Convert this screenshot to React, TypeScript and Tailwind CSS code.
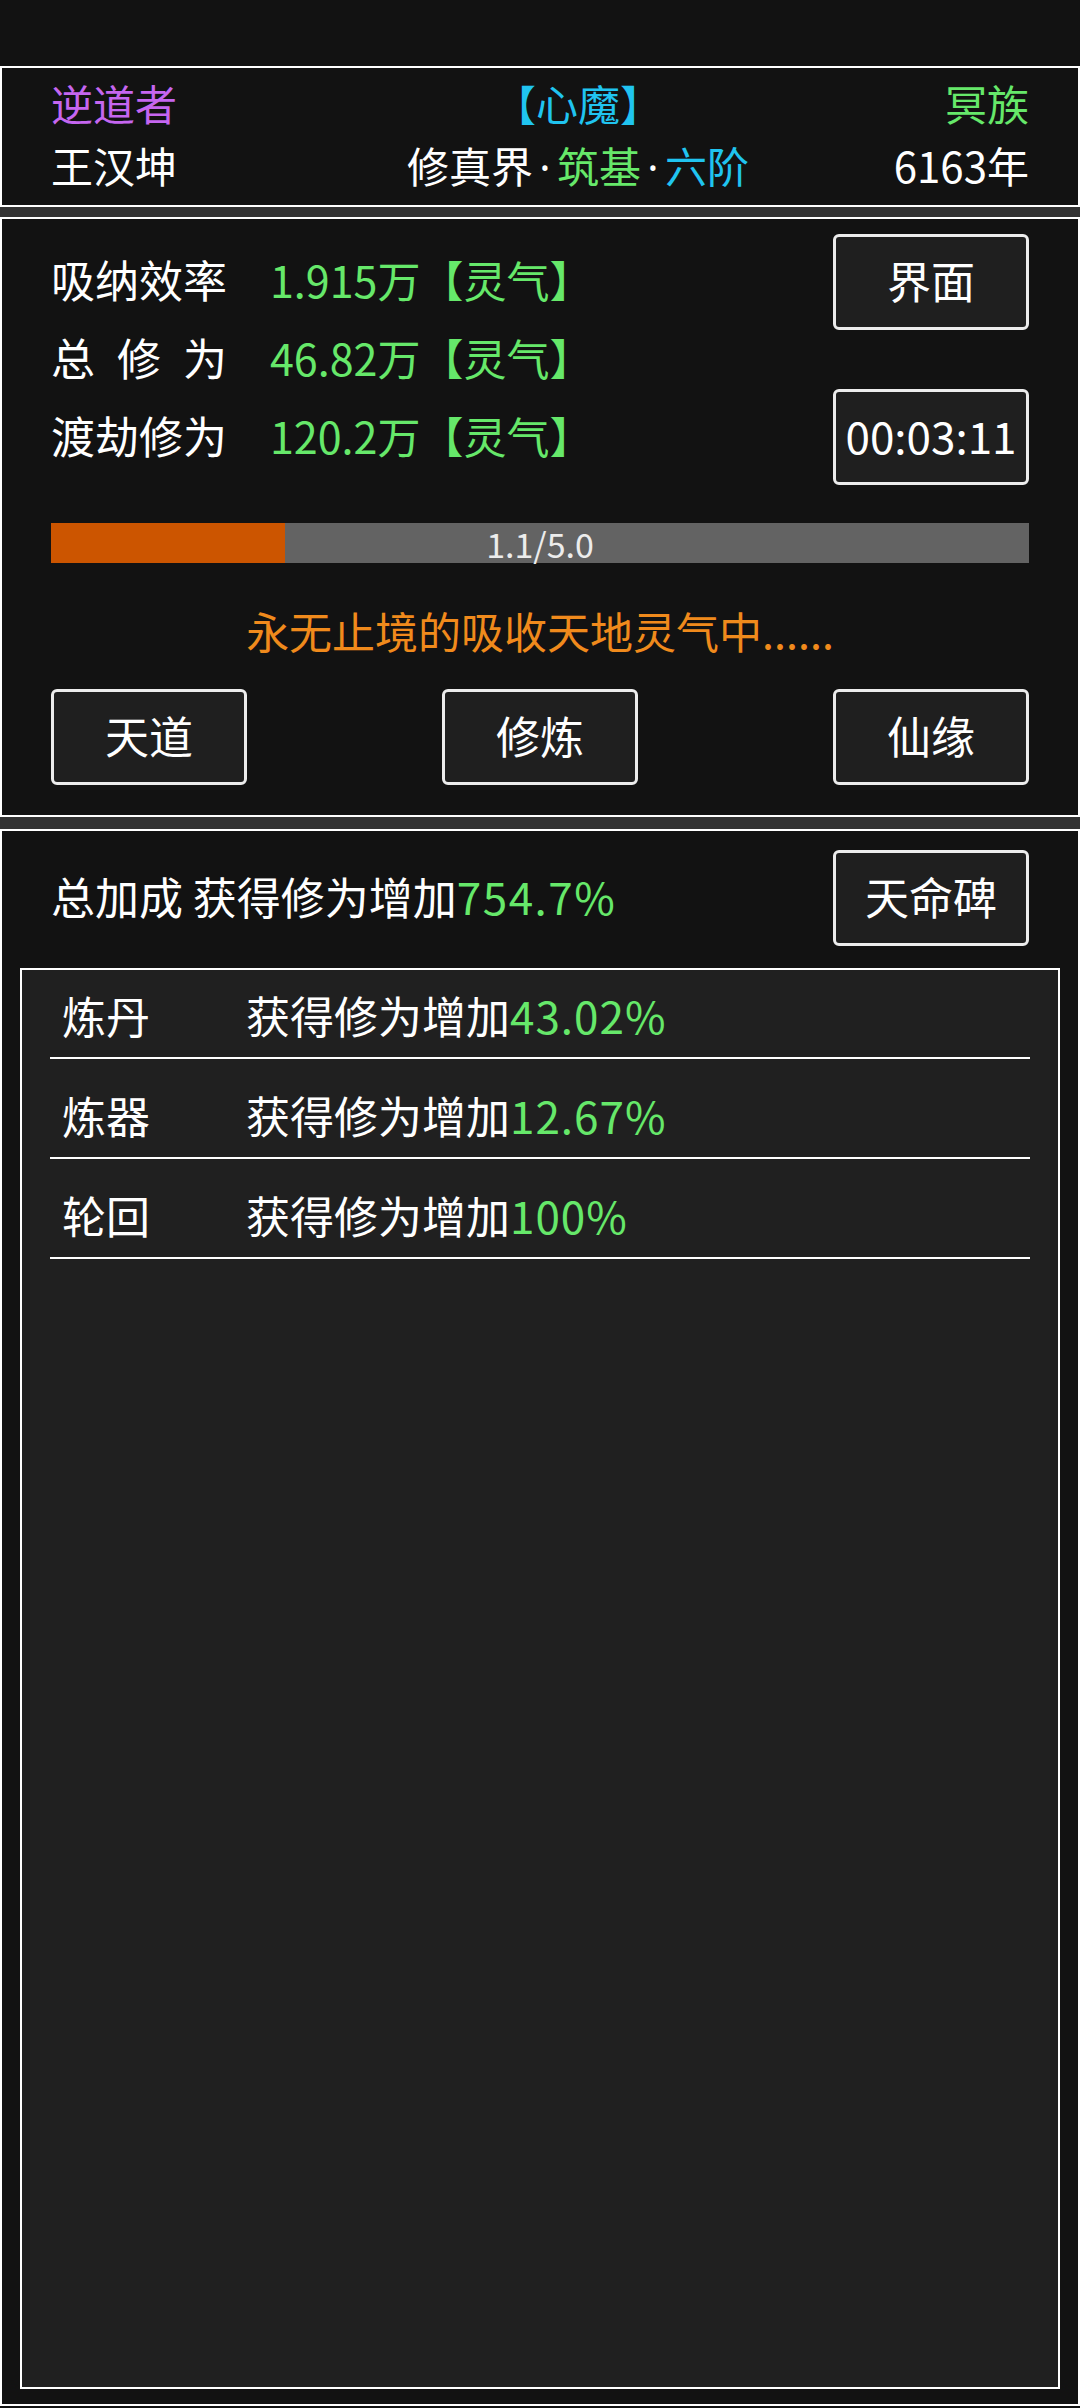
const GREEN = 'text-[#66e86a]';

function Btn({ children }: { children: React.ReactNode }) {
  return (
    <div className="flex h-[96px] w-[196px] shrink-0 items-center justify-center rounded-[6px] border-[3px] border-[#ececec] bg-[#1f1f1f] pb-[5px] text-[44px] leading-none text-white">
      {children}
    </div>
  );
}

function Dot() {
  return <span className="inline-block w-[24px] text-center font-['Noto_Sans',sans-serif] text-white">·</span>;
}

const stats = [
  { label: ['吸', '纳', '效', '率'], value: '1.915' },
  { label: ['总', '修', '为'], value: '46.82' },
  { label: ['渡', '劫', '修', '为'], value: '120.2' },
];

const bonuses = [
  { name: '炼丹', value: '43.02%' },
  { name: '炼器', value: '12.67%' },
  { name: '轮回', value: '100%' },
];

export default function App() {
  return (
    <div className="flex h-[2408px] w-[1080px] flex-col bg-[#121212] pb-[2px] font-['Noto_Sans_CJK_SC','Noto_Sans',sans-serif] text-white">
      <div className="h-[66px] shrink-0" />

      {/* Header */}
      <section className="shrink-0 border-2 border-white px-[49px] pt-[4px] pb-[7px] text-[42px]">
        <div className="grid grid-cols-[254px_546px_1fr] leading-[62px]">
          <span className="text-[#c566f0]">逆道者</span>
          <span className="text-center text-[#20c4f0]">【心魔】</span>
          <span className={`text-right ${GREEN}`}>冥族</span>
          <span>王汉坤</span>
          <span className="text-center">
            修真界<Dot />
            <span className={GREEN}>筑基</span>
            <Dot />
            <span className="text-[#20c4f0]">六阶</span>
          </span>
          <span className="text-right">6163年</span>
        </div>
      </section>
      <div className="h-[10px] shrink-0 bg-[#333]" />

      {/* Cultivation */}
      <section className="shrink-0 border-2 border-white px-[49px] pt-[15px] pb-[30px] text-[44px]">
        <div className="flex justify-between">
          <div className="pt-[6px]">
            {stats.map((s) => (
              <div key={s.value} className="flex h-[78px] items-center leading-[78px]">
                <span className="w-[219px] shrink-0">
                  <span className="flex w-[176px] justify-between">
                    {s.label.map((c, i) => (
                      <span key={i}>{c}</span>
                    ))}
                  </span>
                </span>
                <span className={`${GREEN} text-[43px]`}>{s.value}万【灵气】</span>
              </div>
            ))}
          </div>
          <div className="flex flex-col gap-[59px]">
            <Btn>界面</Btn>
            <Btn>00:03:11</Btn>
          </div>
        </div>

        <div className="relative mt-[38px] h-[40px] bg-[#636363]">
          <div className="h-full w-[234px] bg-[#cc5500]" />
          <span className="absolute inset-0 flex items-center justify-center text-[34px] text-[#ececec]">1.1/5.0</span>
        </div>

        <p className="mt-[37px] text-center text-[43px] leading-[60px] text-[#f08a1c]">永无止境的吸收天地灵气中......</p>

        <div className="mt-[29px] flex justify-between">
          <Btn>天道</Btn>
          <Btn>修炼</Btn>
          <Btn>仙缘</Btn>
        </div>
      </section>
      <div className="h-[12px] shrink-0 bg-[#333]" />

      {/* Bonuses */}
      <section className="flex min-h-0 flex-1 flex-col border-2 border-white pt-[19px] pb-[15px] text-[44px]">
        <div className="flex items-center justify-between px-[49px]">
          <span className="pb-[4px]">
            总加成 获得修为增加<span className={`${GREEN} tracking-[1.5px]`}>754.7%</span>
          </span>
          <Btn>天命碑</Btn>
        </div>
        <div className="mx-[18px] mt-[22px] flex-1 border-2 border-white bg-[#202020] px-[28px] pt-[15px]">
          {bonuses.map((b, i) => (
            <div
              key={b.name}
              className={`flex border-b-2 border-white pb-[12px] leading-[60px] ${i > 0 ? 'mt-[26px]' : ''}`}
            >
              <span className="w-[196px] shrink-0 pl-[12px]">{b.name}</span>
              <span>
                获得修为增加<span className={`${GREEN} tracking-[1px]`}>{b.value}</span>
              </span>
            </div>
          ))}
        </div>
      </section>
    </div>
  );
}
